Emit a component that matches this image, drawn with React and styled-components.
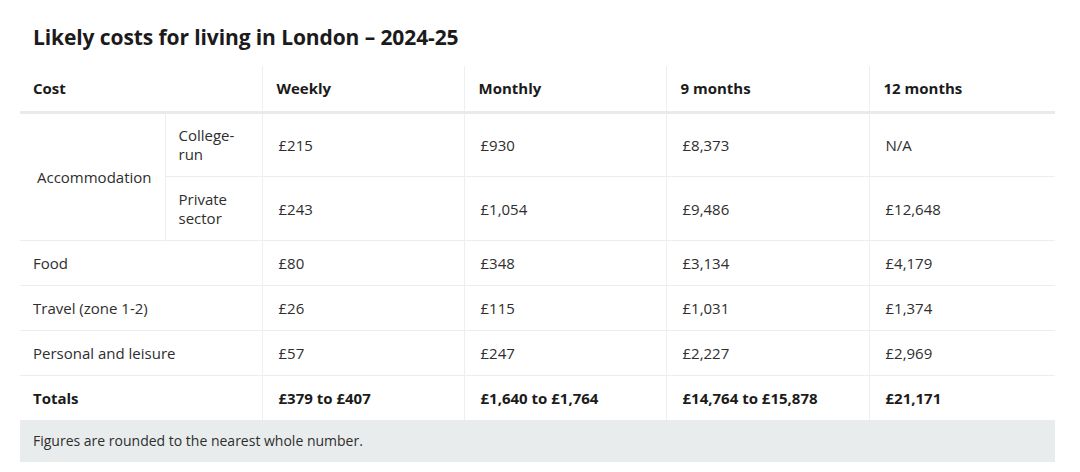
import React from "react";
import styled, { createGlobalStyle } from "styled-components";

const Global = createGlobalStyle`
  html, body { margin: 0; padding: 0; background: #fff; }
  body { font-family: "Open Sans", "Noto Sans", Arial, sans-serif; color: #2b2b2b; }
`;

const Page = styled.div`
  padding: 22px 25px 0 20px;
`;

const Title = styled.h2`
  margin: 0 0 14px 13px;
  font-size: 21px;
  line-height: 30px;
  font-weight: 700;
  color: #1b1b1b;
  letter-spacing: -0.1px;
`;

const Table = styled.table`
  width: 1035px;
  border-collapse: collapse;
  table-layout: fixed;
  font-size: 15px;
  line-height: 19px;
`;

const Th = styled.th`
  text-align: left;
  font-weight: 700;
  color: #1b1b1b;
  padding: 13px 13px 13px ${(p) => (p.$first ? "13px" : "14px")};
  height: 19px;
  border-bottom: 3px solid #e8ebeb;
  border-left: ${(p) => (p.$first ? "none" : "1px solid #eef0f0")};
`;

const Td = styled.td`
  padding: ${(p) => p.$pad || (p.$first ? "13px 13px 12px" : "13px 13px 12px 16px")};
  text-align: ${(p) => (p.$center ? "center" : "left")};
  font-weight: ${(p) => (p.$bold ? 700 : 400)};
  color: ${(p) => (p.$bold ? "#1b1b1b" : "#2e2e2e")};
  border-top: 1px solid #eceeee;
  border-left: ${(p) => (p.$first ? "none" : "1px solid #eef0f0")};
  vertical-align: middle;
`;

const Note = styled.td`
  background: #e9ecec;
  padding: 12px 13px 13px;
  font-size: 14px;
  line-height: 17px;
  color: #2e2e2e;
`;

const rows = [
  ["Food", "£80", "£348", "£3,134", "£4,179"],
  ["Travel (zone 1-2)", "£26", "£115", "£1,031", "£1,374"],
  ["Personal and leisure", "£57", "£247", "£2,227", "£2,969"],
];

export default function App() {
  return (
    <Page>
      <Global />
      <Title>Likely costs for living in London – 2024-25</Title>
      <Table>
        <colgroup>
          <col style={{ width: 145 }} />
          <col style={{ width: 97 }} />
          <col style={{ width: 202 }} />
          <col style={{ width: 202 }} />
          <col style={{ width: 203 }} />
          <col style={{ width: 186 }} />
        </colgroup>
        <thead>
          <tr>
            <Th $first colSpan={2}>Cost</Th>
            <Th>Weekly</Th>
            <Th>Monthly</Th>
            <Th>9 months</Th>
            <Th>12 months</Th>
          </tr>
        </thead>
        <tbody>
          <tr>
            <Td $first rowSpan={2} $center $pad="0 4px 0 8px">Accommodation</Td>
            <Td $pad="12px 13px 12px">College-run</Td>
            <Td>£215</Td>
            <Td>£930</Td>
            <Td>£8,373</Td>
            <Td>N/A</Td>
          </tr>
          <tr>
            <Td $pad="13px 13px 12px">Private sector</Td>
            <Td>£243</Td>
            <Td>£1,054</Td>
            <Td>£9,486</Td>
            <Td>£12,648</Td>
          </tr>
          {rows.map((r) => (
            <tr key={r[0]}>
              <Td $first colSpan={2}>{r[0]}</Td>
              {r.slice(1).map((v, i) => (
                <Td key={i}>{v}</Td>
              ))}
            </tr>
          ))}
          <tr>
            <Td $first $bold colSpan={2}>Totals</Td>
            <Td $bold>£379 to £407</Td>
            <Td $bold>£1,640 to £1,764</Td>
            <Td $bold>£14,764 to £15,878</Td>
            <Td $bold>£21,171</Td>
          </tr>
        </tbody>
        <tfoot>
          <tr>
            <Note colSpan={6}>Figures are rounded to the nearest whole number.</Note>
          </tr>
        </tfoot>
      </Table>
    </Page>
  );
}
